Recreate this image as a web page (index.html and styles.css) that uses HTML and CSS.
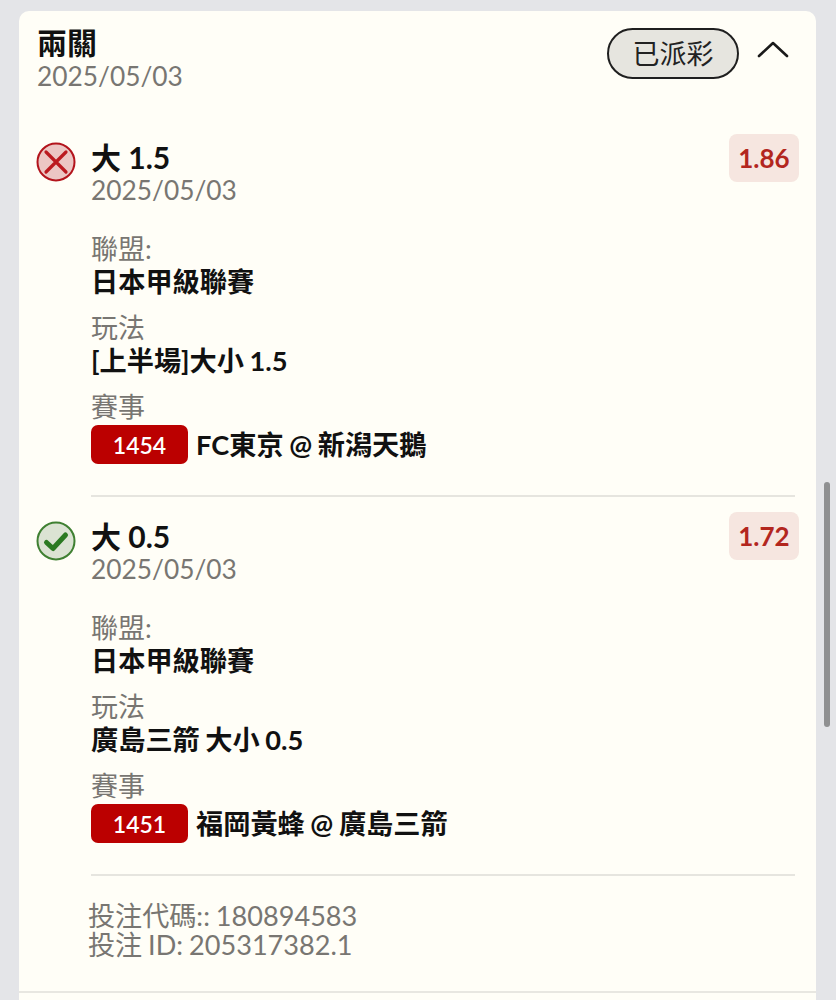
FILE: index.html
```html
<!DOCTYPE html>
<html lang="zh-Hant">
<head>
<meta charset="utf-8">
<title>兩關</title>
<link rel="stylesheet" href="styles.css">
</head>
<body>
<main class="card">
  <header class="head">
    <div class="head-text">
      <h1 class="title">兩關</h1>
      <div class="date head-date">2025/05/03</div>
    </div>
    <span class="pill">已派彩</span>
    <svg class="chev" width="32" height="18" viewBox="0 0 32 18" fill="none"><path d="M2 16 L16 3 L30 16" stroke="#1a1a1a" stroke-width="2.6" stroke-linecap="round" stroke-linejoin="round"/></svg>
  </header>

  <section class="leg first">
    <svg class="status" width="40" height="40" viewBox="0 0 40 40"><circle cx="20" cy="20" r="18.5" fill="#ecc6c4" stroke="#b3141c" stroke-width="2"/><path d="M10 10 L30 30 M30 10 L10 30" stroke="#bb1a20" stroke-width="3.2" stroke-linecap="round"/></svg>
    <div class="leg-body">
      <div class="leg-top">
        <div class="pick-wrap">
          <div class="pick">大 1.5</div>
          <div class="date">2025/05/03</div>
        </div>
        <span class="odds">1.86</span>
      </div>
      <div class="label gap-first">聯盟:</div>
      <div class="value">日本甲級聯賽</div>
      <div class="label">玩法</div>
      <div class="value">[上半場]大小 1.5</div>
      <div class="label">賽事</div>
      <div class="match"><span class="code">1454</span><span class="value">FC東京 @ 新潟天鵝</span></div>
    </div>
  </section>

  <section class="leg">
    <svg class="status" width="40" height="40" viewBox="0 0 40 40"><circle cx="20" cy="20" r="18.5" fill="#dbe3d3" stroke="#3f8032" stroke-width="2"/><path d="M10.5 21.5 L17 27.5 L29.5 14" fill="none" stroke="#2b7a22" stroke-width="5" stroke-linecap="round" stroke-linejoin="round"/></svg>
    <div class="leg-body">
      <div class="leg-top">
        <div class="pick-wrap">
          <div class="pick">大 0.5</div>
          <div class="date">2025/05/03</div>
        </div>
        <span class="odds">1.72</span>
      </div>
      <div class="label gap-first">聯盟:</div>
      <div class="value">日本甲級聯賽</div>
      <div class="label">玩法</div>
      <div class="value">廣島三箭 大小 0.5</div>
      <div class="label">賽事</div>
      <div class="match"><span class="code">1451</span><span class="value">福岡黃蜂 @ 廣島三箭</span></div>
    </div>
  </section>

  <footer class="foot">
    <div>投注代碼:: 180894583</div>
    <div>投注 ID: 205317382.1</div>
  </footer>
</main>
<div class="scroll-thumb"></div>
</body>
</html>
```

FILE: styles.css
```css
* { box-sizing: border-box; }
html, body { height: 100%; }
body {
  margin: 0;
  overflow: hidden;
  background: #e4e5e8;
  font-family: Lato, "Noto Sans CJK TC", sans-serif;
  color: #111;
}
.card {
  margin: 11px 0 0 19px;
  width: 797px;
  height: 1000px;
  background: #fffef7;
  border-radius: 10px 10px 0 0;
}
.head {
  display: flex;
  align-items: flex-start;
  padding: 13px 27px 0 18px;
}
.head-text { flex: 1; }
.title {
  margin: 0;
  font-size: 30px;
  line-height: 36px;
  font-weight: 700;
  color: #111;
}
.date {
  font-size: 26.3px;
  line-height: 30px;
  color: #787672;
}
.head-date { margin-top: 1px; }
.pill {
  width: 132px;
  height: 51px;
  margin-top: 4px;
  border: 2px solid #1f1f1f;
  border-radius: 26px;
  background: #e6e5df;
  font-size: 27px;
  line-height: 47px;
  text-align: center;
  color: #222;
}
.chev { margin: 16px 0 0 18px; }
.leg {
  display: flex;
  align-items: flex-start;
  padding: 0 17px;
}
.leg.first { padding-top: 43px; }
.status { flex: none; margin-top: 8px; }
.leg + .leg .status { margin-top: 24px; }
.leg-body {
  flex: 1;
  margin: 0 4px 0 15px;
  padding-bottom: 31px;
  border-bottom: 2px solid #e6e5df;
}
.leg + .leg .leg-body { padding-top: 16px; }
.leg-top {
  display: flex;
  justify-content: space-between;
  align-items: flex-start;
  margin-right: -4px;
}
.pick-wrap { padding-top: 5px; }
.pick {
  font-size: 30px;
  line-height: 36px;
  font-weight: 700;
  color: #111;
}
.odds {
  width: 70px;
  height: 48px;
  border-radius: 8px;
  background: #f6e6e0;
  color: #b3261e;
  font-size: 26px;
  font-weight: 700;
  line-height: 49px;
  text-align: center;
}
.leg + .leg .odds { margin-top: -1px; }
.label {
  margin-top: 13px;
  font-size: 27px;
  line-height: 33px;
  color: #787672;
}
.label.gap-first { margin-top: 27px; }
.value {
  font-size: 27.2px;
  line-height: 33px;
  font-weight: 700;
  word-spacing: -1px;
  color: #111;
}
.match {
  display: flex;
  align-items: center;
  gap: 8px;
  margin-top: 2px;
}
.code {
  width: 97px;
  height: 39px;
  border-radius: 7px;
  background: #bb0000;
  color: #fff;
  font-size: 23px;
  font-weight: 600;
  line-height: 41px;
  text-align: center;
}
.foot {
  margin: 25px 0 0;
  padding-left: 69px;
  font-size: 27.1px;
  line-height: 29px;
  word-spacing: -1px;
  color: #787672;
}
.foot::after {
  content: "";
  display: block;
  margin: 32px 0 0 -69px;
  height: 2px;
  background: #e8e7e1;
}
.scroll-thumb {
  position: absolute;
  left: 824px;
  top: 482px;
  width: 6px;
  height: 245px;
  border-radius: 3px;
  background: #8f9091;
}
```
